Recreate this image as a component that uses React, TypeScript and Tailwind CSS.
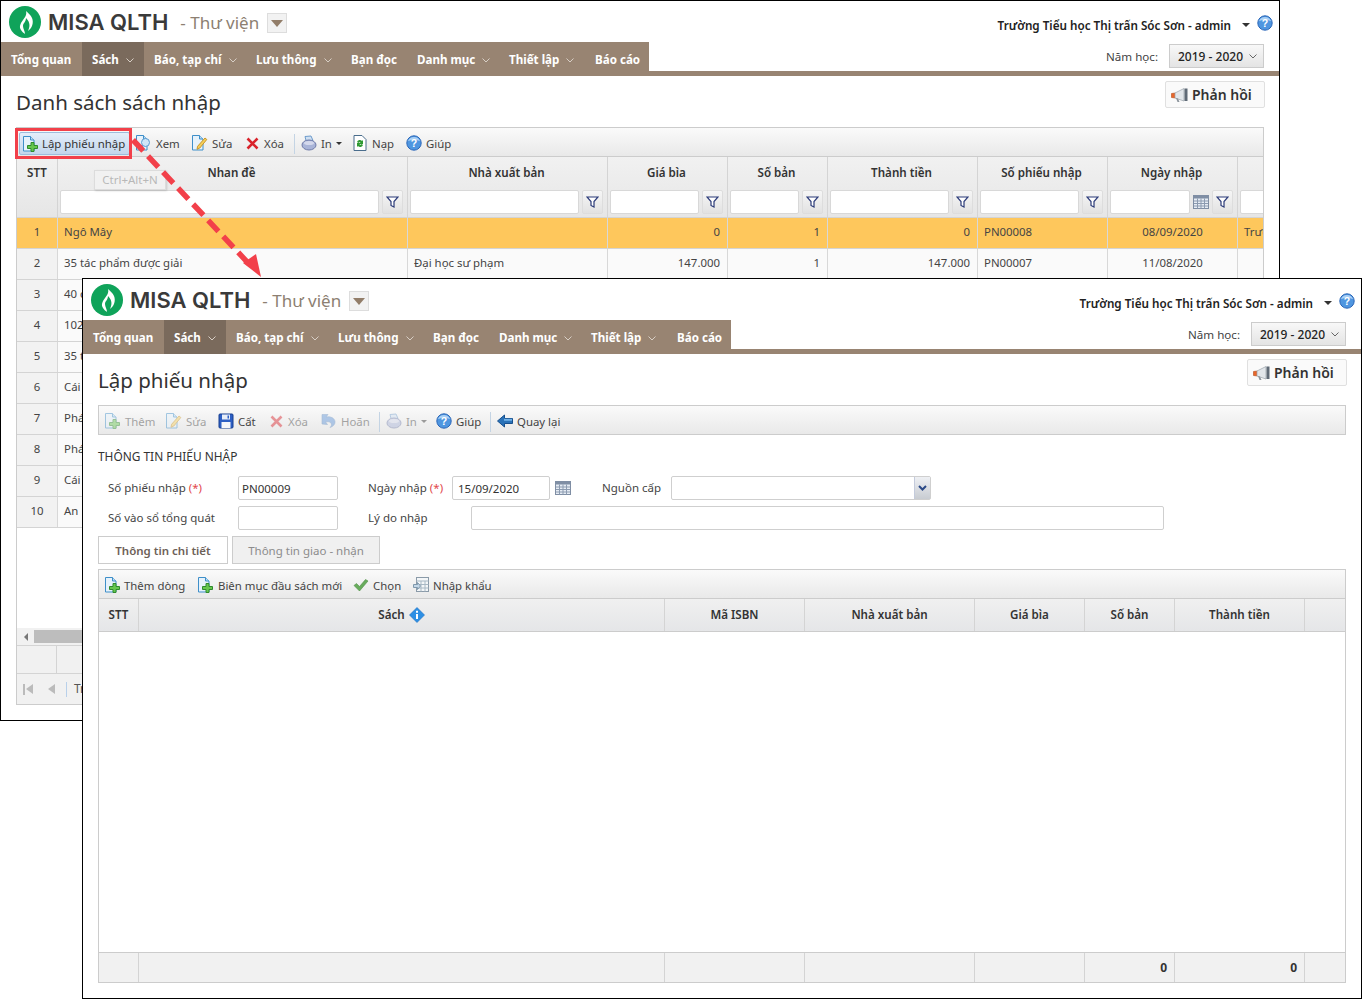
import React from "react";

const FONT = "font-['Noto_Sans','Open_Sans',sans-serif]";

function DocBase({ children }: { children?: React.ReactNode }) {
  return (
    <svg width="16" height="16" viewBox="0 0 16 16" className="shrink-0">
      <path d="M.5 .5h7l3.500 3.500v11h-10.500z" fill="#e6f2fb" stroke="#3f8fc9" />
      <path d="M7.500 .5v3.500h3.500" fill="#bcdcf2" stroke="#3f8fc9" />
      {children}
    </svg>
  );
}
const PlusDoc = () => (
  <DocBase>
    <path d="M8 6.500h3v3h3.500v3h-3.500v3h-3v-3h-3.500v-3h3.500z" fill="#66c64e" stroke="#2f8a2c" />
  </DocBase>
);
const ViewDoc = () => (
  <DocBase>
    <circle cx="9.500" cy="7.500" r="4" fill="#cfe6f8" stroke="#5b9bd0" />
    <path d="M6.500 10.500l-3.500 4" stroke="#8a6fb8" strokeWidth="2" />
  </DocBase>
);
const EditDoc = () => (
  <DocBase>
    <path d="M13 3l1.800 1.500-7 8.500-2.800 1.300.6-3z" fill="#f5cf5a" stroke="#c9962b" />
  </DocBase>
);
const RedX = () => (
  <svg width="13" height="13" viewBox="0 0 13 13" className="shrink-0">
    <path d="M1.500 1.500l10 10M11.500 1.500l-10 10" stroke="#d9232b" strokeWidth="2.600" />
  </svg>
);
const Printer = () => (
  <svg width="16" height="16" viewBox="0 0 16 16" className="shrink-0">
    <path d="M4 1.500l6-.5 2 4.500h-7z" fill="#cfe0f2" stroke="#6f9ccc" />
    <ellipse cx="8" cy="10" rx="7" ry="5" fill="#a9b4d8" stroke="#6f7aa8" />
    <ellipse cx="8" cy="8" rx="5" ry="2" fill="#d4d8ec" />
  </svg>
);
const Reload = () => (
  <svg width="14" height="16" viewBox="0 0 14 16" className="shrink-0">
    <path d="M1 .5h8l4 4v11h-12z" fill="#fff" stroke="#4a6d8c" />
    <path d="M4 7a3 3 0 015-1l1-1v4h-4l1.500-1.500a1.500 1.500 0 00-2 .5zM10 10a3 3 0 01-5 1l-1 1v-4h4l-1.500 1.500a1.500 1.500 0 002-.5z" fill="#2f9a32" />
  </svg>
);
const Help = ({ size = 16 }: { size?: number }) => (
  <svg width={size} height={size} viewBox="0 0 16 16" className="shrink-0">
    <circle cx="8" cy="8" r="7.200" fill="#4f96e0" stroke="#2a66b8" />
    <path d="M2 6a6.400 6 0 0112 0c-3-1.500-9-1.500-12 0z" fill="#a9d0f5" />
    <text x="8" y="12" textAnchor="middle" fontSize="10.500" fontWeight="700" fill="#fff" fontFamily="Liberation Sans">?</text>
  </svg>
);
const Save = () => (
  <svg width="16" height="16" viewBox="0 0 16 16" className="shrink-0">
    <rect x="1" y="1" width="14" height="14" rx="1" fill="#2d5fc4" stroke="#173f8f" />
    <rect x="4" y="1.500" width="8" height="5" fill="#e8eef8" />
    <rect x="9.500" y="2.500" width="1.500" height="3" fill="#2d5fc4" />
    <rect x="3.500" y="9" width="9" height="6" fill="#f4f6fa" />
  </svg>
);
const Undo = () => (
  <svg width="16" height="16" viewBox="0 0 16 16" className="shrink-0">
    <path d="M1 1.500l6 0-2 2.500c5-1 9 1.500 9 5 0 2.500-2 4.500-5 5.500 1.500-1.500 2-3 1-4.500-1-1.300-3-1.500-5.500-1l2 2.500-5.500-.5z" fill="#5c93d8" stroke="#4a78b4" strokeWidth=".6" />
  </svg>
);
const Back = () => (
  <svg width="16" height="14" viewBox="0 0 16 14" className="shrink-0">
    <path d="M.5 7l7-6v3.500h8v5h-8v3.500z" fill="#2a72b8" stroke="#174f8c" />
    <path d="M7 4.800h8v2h-8z" fill="#6fb0e8" />
  </svg>
);
const Check = () => (
  <svg width="16" height="14" viewBox="0 0 16 14" className="shrink-0">
    <path d="M1 7.500l2.500-2 3 3 6-7 2.500 1.500-8.500 10z" fill="#68ac5c" stroke="#4f8f46" strokeWidth=".6" />
  </svg>
);
const ImportIcon = () => (
  <svg width="16" height="16" viewBox="0 0 16 16" className="shrink-0">
    <rect x="3.500" y=".5" width="12" height="14" fill="#f3f6f8" stroke="#8a9aa8" />
    <path d="M3.500 4h12M3.500 7.500h12M3.500 11h12M8 4v10.500M12 4v10.500" stroke="#a8b8c4" />
    <path d="M.5 7.500h4v-2l3 3.500-3 3.500v-2h-4z" fill="#c4d8e8" stroke="#7f98ac" />
  </svg>
);
const Megaphone = () => (
  <svg width="18" height="16" viewBox="0 0 18 16" className="shrink-0">
    <path d="M.5 6.500l4-.5v5l-4-.5z" fill="#e8662a" stroke="#b54a18" strokeWidth=".6" />
    <path d="M4 6l9-4.500v12.500l-9-3z" fill="#e2e6ea" stroke="#9aa2aa" strokeWidth=".7" />
    <path d="M13.500 1.500h3v12.500h-3z" fill="#5f6a76" />
    <path d="M5 11l1.500 4h2l-1.500-3.500z" fill="#8c949c" />
  </svg>
);
const Funnel = () => (
  <svg width="13" height="12" viewBox="0 0 13 12">
    <path d="M1 1h11l-4 4.500v5.500l-3-1.500v-4z" fill="#fff" stroke="#2a3a78" strokeWidth="1.200" />
  </svg>
);
const Calendar = () => (
  <svg width="16" height="16" viewBox="0 0 16 16" className="shrink-0">
    <rect x=".5" y="1.500" width="15" height="13" fill="#e6ecf4" stroke="#7f8ea4" />
    <rect x="1" y="2" width="14" height="2.500" fill="#7f8ea4" />
    <path d="M1 7h14M1 9.500h14M1 12h14M4.500 4.500v10M8 4.500v10M11.500 4.500v10" stroke="#8c9bb0" />
  </svg>
);
const InfoDiamond = () => (
  <svg width="16" height="16" viewBox="0 0 16 16" className="inline-block shrink-0">
    <path d="M8 .5l7.500 7.500-7.500 7.500-7.500-7.500z" fill="#2d8fe4" stroke="#1a6cc0" strokeWidth=".6" />
    <path d="M7 7h2v5h-2zM7 3.800h2v2h-2z" fill="#fff" />
  </svg>
);
const Chev = ({ color = "#d8cfc6" }: { color?: string }) => (
  <svg width="8" height="5" viewBox="0 0 8 5" className="shrink-0">
    <path d="M.5 .5l3.500 3.500 3.500-3.500" fill="none" stroke={color} />
  </svg>
);
const Logo = () => (
  <svg width="32" height="32" viewBox="0 0 32 32" className="shrink-0">
    <circle cx="16" cy="16" r="16" fill="#0fa35a" />
    <path d="M17 5c1 4-1 6-3 9-3 4-4 7-2 10 1 2 3 3 4 4 0-3-2-5-2-8 0-3 3-4 3-8 3 3 5 7 2 13 4-3 6-8 4-13-1-3-4-5-6-7z" fill="#fff" />
  </svg>
);

const NAV: { label: string; w: string; chev?: boolean; active?: boolean }[] = [
  { label: "Tổng quan", w: "w-[81px]" },
  { label: "Sách", w: "w-[62px]", chev: true, active: true },
  { label: "Báo, tạp chí", w: "w-[102px]", chev: true },
  { label: "Lưu thông", w: "w-[95px]", chev: true },
  { label: "Bạn đọc", w: "w-[66px]" },
  { label: "Danh mục", w: "w-[92px]", chev: true },
  { label: "Thiết lập", w: "w-[86px]", chev: true },
  { label: "Báo cáo", w: "w-[64px]" },
];

function Header() {
  return (
    <>
      <div className="flex h-[41px] shrink-0 items-start">
        <div className="ml-[8px] mt-[5px]"><Logo /></div>
        <div className="ml-[7px] mt-[5px] font-['Inter',sans-serif] text-[22px] font-semibold leading-[32px] text-[#3a3a3a]">MISA QLTH</div>
        <div className="ml-[12px] mt-[7px] text-[17px] leading-[30px] text-[#8d7f72]">- Thư viện</div>
        <div className="ml-[8px] mt-[12px] flex h-[20px] w-[20px] items-center justify-center border border-[#dddddd] bg-[#f2f2f2]">
          <div className="h-0 w-0 border-x-[6px] border-t-[7px] border-x-transparent border-t-[#927d69]" />
        </div>
        <div className="ml-auto mr-[6px] mt-[14px] flex items-center">
          <span className="text-[11.7px] font-semibold leading-[20px] text-[#222]">Trường Tiểu học Thị trấn Sóc Sơn - admin</span>
          <div className="ml-[11px] h-0 w-0 border-x-[4px] border-t-[4px] border-x-transparent border-t-[#333]" />
          <div className="ml-[7px] -mt-[4px]"><Help size={16} /></div>
        </div>
      </div>
      <div className="flex h-[34px] shrink-0 items-start justify-between border-b-[5px] border-[#988472]">
        <div className="flex h-[34px] bg-[#988472]">
          {NAV.map((n) => (
            <div key={n.label} className={`flex items-center gap-[7px] pl-[10px] pt-[2px] text-[11.6px] font-bold text-white ${n.w} ${n.active ? "bg-[#7a6a5c]" : ""}`}>
              <span className="whitespace-nowrap">{n.label}</span>
              {n.chev && <Chev />}
            </div>
          ))}
        </div>
        <div className="mr-[15px] mt-[2px] flex items-center">
          <span className="mr-[11px] pt-[2px] text-[11.6px] text-[#444]">Năm học:</span>
          <div className="flex h-[24px] w-[95px] items-center justify-between border border-[#cccccc] bg-gradient-to-b from-[#f8f8f8] to-[#e4e4e4] pl-[8px] pr-[6px] pt-[1px] text-[12px] font-medium text-[#222]">
            <span>2019 - 2020</span>
            <Chev color="#666" />
          </div>
        </div>
      </div>
    </>
  );
}

function TitleRow({ title }: { title: string }) {
  return (
    <div className="flex h-[51px] shrink-0 items-start justify-between">
      <h1 className="pt-[11px] text-[20.5px] font-normal leading-[30px] text-[#333]">{title}</h1>
      <div className="mr-[-1px] mt-[5px] flex h-[27px] w-[100px] items-center gap-[3px] rounded-[2px] border border-[#e0e0e0] bg-[#fafafa] pl-[5px] text-[14px] font-semibold text-[#333]">
        <Megaphone />
        <span className="whitespace-nowrap">Phản hồi</span>
      </div>
    </div>
  );
}

function Tool({ icon, label, w, dim, caret, iw = "w-[20px]" }: { icon: React.ReactNode; label: string; w: string; dim?: boolean; caret?: boolean; iw?: string }) {
  return (
    <div className={`flex shrink-0 items-center ${w} ${dim ? "opacity-45" : ""}`}>
      <span className={`flex shrink-0 items-center ${iw}`}>{icon}</span>
      <span className="whitespace-nowrap text-[11.4px] text-[#444]">{label}</span>
      {caret && <span className="ml-[4px] h-0 w-0 border-x-[3px] border-t-[3px] border-x-transparent border-t-[#333]" />}
    </div>
  );
}
const Sep = ({ m }: { m: string }) => <div className={`h-[20px] w-px shrink-0 bg-[#c4d4e4] ${m}`} />;

const toolbar = "flex h-[30px] shrink-0 items-center border border-[#cccccc] bg-gradient-to-b from-[#fafafa] to-[#e9e9e9] pt-[3px]";

const COLS1 = "grid grid-cols-[40px_350px_200px_120px_100px_150px_130px_130px_1fr]";
const HEADS1 = ["Nhan đề", "Nhà xuất bản", "Giá bìa", "Số bản", "Thành tiền", "Số phiếu nhập", "Ngày nhập"];

function FilterCell({ label, calendar, clip }: { label: string; calendar?: boolean; clip?: boolean }) {
  return (
    <div className={`flex h-[60px] flex-col border-l border-[#d4d4d4] pl-[2px] ${clip ? "overflow-hidden" : "pr-[4px]"}`}>
      <div className="flex h-[33px] items-center justify-center pb-[2px] text-[11.6px] font-semibold text-[#333]">{label}</div>
      <div className={`flex gap-[3px] ${clip ? "w-[60px]" : ""}`}>
        <div className="h-[24px] min-w-0 flex-1 rounded-[2px] border border-[#d8d8d8] bg-white" />
        {calendar && <div className="flex w-[16px] items-center"><Calendar /></div>}
        {!clip && <div className="flex h-[24px] w-[21px] shrink-0 items-center justify-center rounded-[2px] border border-[#dddddd] bg-gradient-to-b from-[#f6f6f6] to-[#e2e2e2]"><Funnel /></div>}
      </div>
    </div>
  );
}

const ROWS = [
  ["1", "Ngô Mây", "", "0", "1", "0", "PN00008", "08/09/2020", "Trường"],
  ["2", "35 tác phẩm được giải", "Đại học sư phạm", "147.000", "1", "147.000", "PN00007", "11/08/2020", ""],
  ["3", "40 c"], ["4", "102"], ["5", "35 t"], ["6", "Cái"], ["7", "Phá"], ["8", "Phá"], ["9", "Cái"], ["10", "An"],
];

function ListWindow() {
  return (
    <div className={`absolute left-0 top-0 flex h-[721px] w-[1280px] flex-col overflow-hidden border border-black bg-white ${FONT}`}>
      <Header />
      <div className="flex flex-1 flex-col px-[15px] pb-[15px]">
        <TitleRow title="Danh sách sách nhập" />
        <div className={toolbar}>
          <div className="ml-[2px] flex h-[23px] w-[111px] shrink-0 items-center rounded-[2px] border border-[#9ebcdc] bg-gradient-to-b from-[#e4eefa] to-[#c3d6ec] pl-[3px]">
            <span className="flex w-[19px] items-center"><PlusDoc /></span>
            <span className="whitespace-nowrap text-[11.4px] text-[#333]">Lập phiếu nhập</span>
          </div>
          <div className="ml-[6px] flex">
            <Tool icon={<ViewDoc />} label="Xem" w="w-[56px]" />
            <Tool icon={<EditDoc />} label="Sửa" w="w-[54px]" />
            <Tool icon={<RedX />} iw="w-[18px]" label="Xóa" w="w-[48px]" />
          </div>
          <Sep m="mr-[6px]" />
          <Tool icon={<Printer />} label="In" w="w-[52px]" caret />
          <Tool icon={<Reload />} iw="w-[19px]" label="Nạp" w="w-[53px]" />
          <Tool icon={<Help />} label="Giúp" w="w-[60px]" />
        </div>
        <div className="flex flex-1 flex-col border-x border-b border-[#cccccc]">
          <div className={`${COLS1} bg-gradient-to-b from-[#f1f1f1] to-[#e6e6e6]`}>
            <div className="h-[60px] pt-[7px] text-center text-[11.6px] font-semibold leading-[18px] text-[#333]">STT</div>
            {HEADS1.map((h) => <FilterCell key={h} label={h} calendar={h === "Ngày nhập"} />)}
            <FilterCell label="" clip />
          </div>
          {ROWS.map((r, i) => (
            <div key={r[0]} className={`${COLS1} h-[31px] border-t border-[#d4d4d4] text-[11.4px] text-[#444] ${i === 0 ? "bg-[#fec75c]" : "bg-[#fafafa]"}`}>
              <div className={`flex items-center justify-center pb-[2px] ${i === 0 ? "" : "bg-[#f2f2f2]"}`}>{r[0]}</div>
              <div className="flex items-center border-l border-[#d8d8d8] pb-[2px] pl-[6px]">{r[1]}</div>
              <div className="flex items-center border-l border-[#d8d8d8] pb-[2px] pl-[6px]">{r[2]}</div>
              <div className="flex items-center justify-end border-l border-[#d8d8d8] pb-[2px] pr-[7px]">{r[3]}</div>
              <div className="flex items-center justify-end border-l border-[#d8d8d8] pb-[2px] pr-[7px]">{r[4]}</div>
              <div className="flex items-center justify-end border-l border-[#d8d8d8] pb-[2px] pr-[7px]">{r[5]}</div>
              <div className="flex items-center border-l border-[#d8d8d8] pb-[2px] pl-[6px]">{r[6]}</div>
              <div className="flex items-center justify-center border-l border-[#d8d8d8] pb-[2px]">{r[7]}</div>
              <div className="flex items-center overflow-hidden whitespace-nowrap border-l border-[#d8d8d8] pb-[2px] pl-[6px]">{r[8]}</div>
            </div>
          ))}
          <div className="flex-1 border-t border-[#d4d4d4]" />
          <div className="flex h-[17px] items-center bg-[#f1f1f1]">
            <div className="ml-[7px] h-0 w-0 border-y-[4px] border-r-[4px] border-y-transparent border-r-[#777]" />
            <div className="ml-[6px] h-[13px] flex-1 bg-[#bdbdbd]" />
          </div>
          <div className="flex h-[29px] border-y border-[#d4d4d4] bg-[#f1f1f1]">
            <div className="w-[40px] border-r border-[#d4d4d4]" />
          </div>
          <div className="flex h-[30px] items-center bg-[#f1f1f1] pl-[6px] text-[12px] text-[#555]">
            <div className="h-[11px] w-[2px] bg-[#bbb]" />
            <div className="ml-[1px] h-0 w-0 border-y-[5px] border-r-[7px] border-y-transparent border-r-[#bbb]" />
            <div className="ml-[15px] h-0 w-0 border-y-[5px] border-r-[7px] border-y-transparent border-r-[#bbb]" />
            <div className="ml-[11px] h-[15px] w-px bg-[#b8d0ea]" />
            <span className="ml-[7px]">Trang</span>
          </div>
        </div>
      </div>
    </div>
  );
}

const Label = ({ children, w }: { children: React.ReactNode; w: string }) => (
  <span className={`shrink-0 whitespace-nowrap text-[11.5px] text-[#444] ${w}`}>{children}</span>
);
const Req = () => <span className="text-[#e2474c]">(*)</span>;
const Input = ({ w, value }: { w: string; value?: string }) => (
  <div className={`flex h-[24px] shrink-0 items-center rounded-[2px] border border-[#cfcfcf] bg-white pl-[3px] pt-[1px] text-[11.5px] text-[#333] ${w}`}>{value}</div>
);

const COLS2 = "grid grid-cols-[39px_526px_140px_170px_110px_90px_130px_1fr]";

function FormWindow() {
  return (
    <div className={`absolute left-[82px] top-[278px] flex h-[721px] w-[1280px] flex-col overflow-hidden border border-black bg-white ${FONT}`}>
      <Header />
      <div className="flex flex-1 flex-col px-[15px] pb-[15px]">
        <TitleRow title="Lập phiếu nhập" />
        <div className={toolbar}>
          <div className="ml-[6px] flex">
            <Tool icon={<PlusDoc />} label="Thêm" w="w-[61px]" dim />
            <Tool icon={<EditDoc />} label="Sửa" w="w-[52px]" dim />
            <Tool icon={<Save />} label="Cất" w="w-[52px]" />
            <Tool icon={<RedX />} iw="w-[18px]" label="Xóa" w="w-[51px]" dim />
            <Tool icon={<Undo />} label="Hoãn" w="w-[58px]" dim />
          </div>
          <Sep m="mr-[6px]" />
          <Tool icon={<Printer />} label="In" w="w-[50px]" dim caret />
          <Tool icon={<Help />} label="Giúp" w="w-[54px]" />
          <Sep m="mr-[6px]" />
          <Tool icon={<Back />} label="Quay lại" w="w-[70px]" />
        </div>
        <div className="mt-[13px] flex h-[18px] items-center text-[11.9px] text-[#333]">THÔNG TIN PHIẾU NHẬP</div>
        <div className="mt-[10px] flex items-center pl-[10px]">
          <Label w="w-[130px]">Số phiếu nhập <Req /></Label>
          <Input w="w-[100px]" value="PN00009" />
          <Label w="ml-[30px] w-[84px]">Ngày nhập <Req /></Label>
          <Input w="w-[98px] pl-[5px]" value="15/09/2020" />
          <span className="ml-[5px] flex w-[47px]"><Calendar /></span>
          <Label w="w-[69px]">Nguồn cấp</Label>
          <div className="flex h-[24px] w-[260px] shrink-0 rounded-[2px] border border-[#cfcfcf] bg-white">
            <div className="flex-1" />
            <div className="flex w-[16px] items-center justify-center border-l border-[#c4cbdc] bg-gradient-to-b from-[#eef0f4] to-[#c8ccd2]">
              <svg width="9" height="6" viewBox="0 0 9 6"><path d="M1 1l3.500 3.500 3.500-3.500" fill="none" stroke="#2c4a88" strokeWidth="2" /></svg>
            </div>
          </div>
        </div>
        <div className="mt-[6px] flex items-center pl-[10px]">
          <Label w="w-[130px]">Số vào sổ tổng quát</Label>
          <Input w="w-[100px]" />
          <Label w="ml-[30px] w-[103px]">Lý do nhập</Label>
          <Input w="w-[693px]" />
        </div>
        <div className="mt-[6px] flex h-[28px] shrink-0 gap-[4px]">
          <div className="flex w-[130px] items-center justify-center border border-[#cccccc] bg-white pt-[1px] text-[11.5px] font-semibold text-[#6d6158]">Thông tin chi tiết</div>
          <div className="flex w-[148px] items-center justify-center border border-[#cccccc] bg-[#f0f0f0] pt-[1px] text-[11.5px] text-[#8c8c8c]">Thông tin giao - nhận</div>
        </div>
        <div className={`mt-[5px] ${toolbar}`}>
          <div className="ml-[6px] flex">
            <Tool icon={<PlusDoc />} iw="w-[19px]" label="Thêm dòng" w="w-[93px]" />
            <Tool icon={<PlusDoc />} label="Biên mục đầu sách mới" w="w-[155px]" />
            <Tool icon={<Check />} label="Chọn" w="w-[60px]" />
            <Tool icon={<ImportIcon />} label="Nhập khẩu" w="w-[90px]" />
          </div>
        </div>
        <div className="flex flex-1 flex-col border-x border-b border-[#cccccc]">
          <div className={`${COLS2} h-[33px] border-b border-[#cccccc] bg-gradient-to-b from-[#f0f0f0] to-[#e5e6e8] text-[11.6px] font-semibold text-[#333]`}>
            <div className="flex items-center justify-center">STT</div>
            <div className="flex items-center justify-center gap-[4px] border-l border-[#d4d4d4]">Sách <InfoDiamond /></div>
            <div className="flex items-center justify-center border-l border-[#d4d4d4]">Mã ISBN</div>
            <div className="flex items-center justify-center border-l border-[#d4d4d4]">Nhà xuất bản</div>
            <div className="flex items-center justify-center border-l border-[#d4d4d4]">Giá bìa</div>
            <div className="flex items-center justify-center border-l border-[#d4d4d4]">Số bản</div>
            <div className="flex items-center justify-center border-l border-[#d4d4d4]">Thành tiền</div>
            <div className="border-l border-[#d4d4d4]" />
          </div>
          <div className="flex-1" />
          <div className={`${COLS2} h-[30px] border-t border-[#cccccc] bg-[#f1f1f1] text-[12px] font-bold text-[#333]`}>
            <div />
            <div className="border-l border-[#d4d4d4]" />
            <div className="border-l border-[#d4d4d4]" />
            <div className="border-l border-[#d4d4d4]" />
            <div className="border-l border-[#d4d4d4]" />
            <div className="flex items-center justify-end border-l border-[#d4d4d4] pr-[7px]">0</div>
            <div className="flex items-center justify-end border-l border-[#d4d4d4] pr-[7px]">0</div>
            <div className="border-l border-[#d4d4d4]" />
          </div>
        </div>
      </div>
    </div>
  );
}

function Tooltip() {
  return (
    <div className={`absolute left-[94px] top-[170px] flex h-[20px] w-[72px] items-center justify-center border border-[#dcdcdc] bg-[#f1f1f1] text-[11.5px] text-[#b8b8b8] shadow-[1px_1px_2px_rgba(0,0,0,0.15)] ${FONT}`}>Ctrl+Alt+N</div>
  );
}

function Callout() {
  return (
    <svg width="300" height="290" viewBox="0 0 300 290" className="pointer-events-none absolute left-0 top-0">
      <rect x="16.500" y="129.500" width="114" height="28" fill="none" stroke="#f2404a" strokeWidth="3" />
      <path d="M133 140L250 265" stroke="#f2404a" strokeWidth="5.500" strokeDasharray="15 7" fill="none" />
      <path d="M261 277L243 263L256 254Z" fill="#f2404a" />
    </svg>
  );
}

export default function App() {
  return (
    <div className="relative h-[999px] w-[1362px] overflow-hidden bg-white">
      <ListWindow />
      <Tooltip />
      <FormWindow />
      <Callout />
    </div>
  );
}
